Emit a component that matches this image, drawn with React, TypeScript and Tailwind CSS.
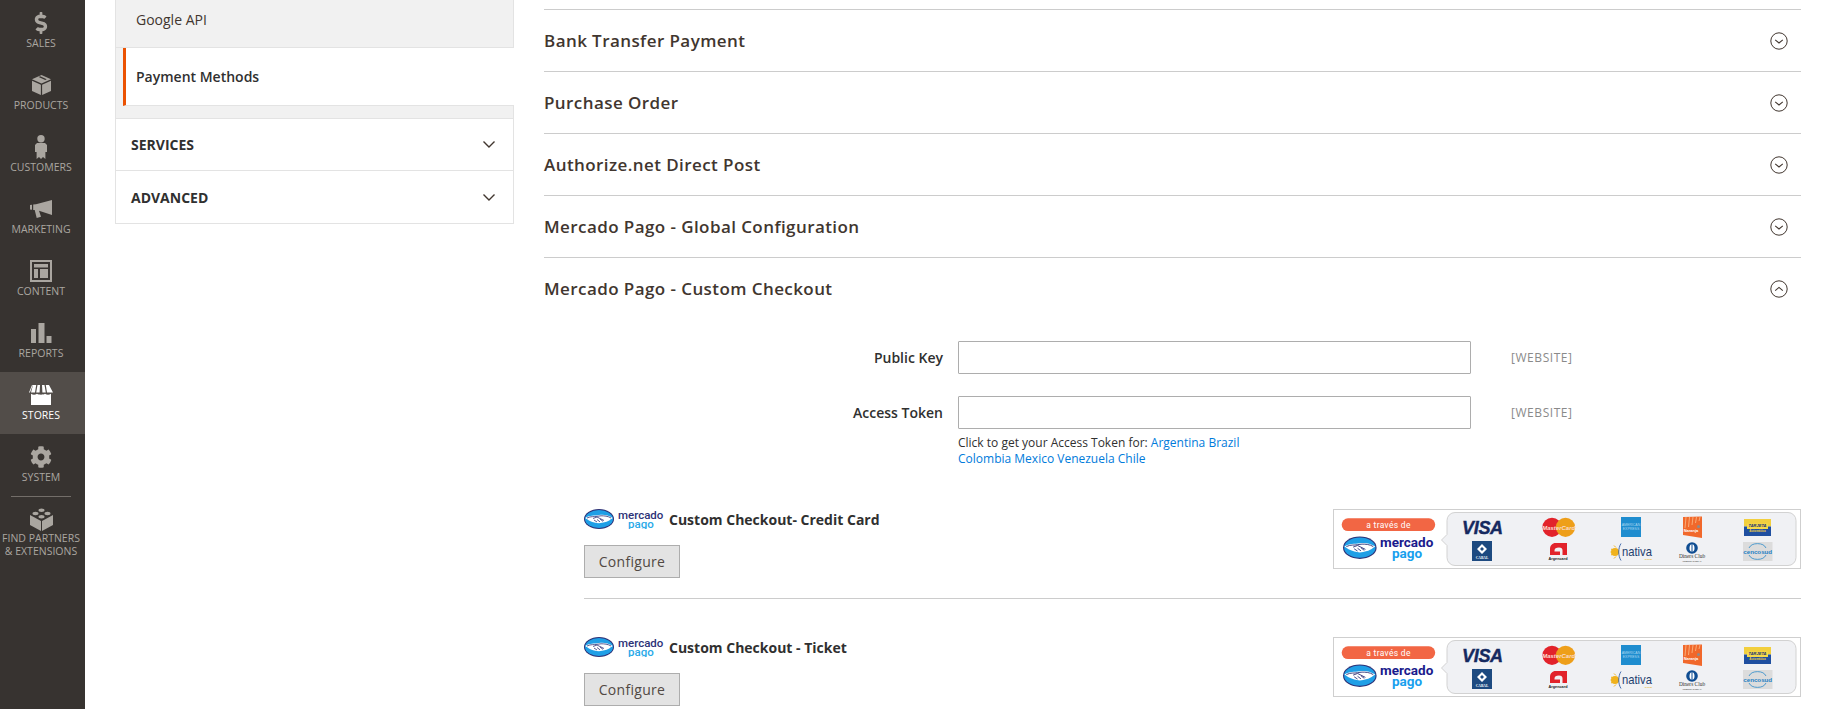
import React from "react";
import { FaDollarSign, FaCog } from "react-icons/fa";

function Chev({ up = false }: { up?: boolean }) {
  return (
    <svg width="18" height="18" viewBox="0 0 18 18" fill="none" stroke="#41362f">
      <circle cx="9" cy="9" r="8.2" strokeWidth="1" />
      <path d={up ? "M5.2 10.6 L9 7.4 L12.8 10.6" : "M5.2 7.8 L9 11 L12.8 7.8"} strokeWidth="1.1" />
    </svg>
  );
}

function SmallChev() {
  return (
    <svg width="14" height="9" viewBox="0 0 14 9" fill="none" stroke="#41362f" strokeWidth="1.4">
      <path d="M1.5 1.5 L7 7 L12.5 1.5" />
    </svg>
  );
}

const icons: Record<string, React.ReactNode> = {
  sales: <FaDollarSign size={22} />,
  products: (
    <svg width="19" height="20" viewBox="0 0 19 20" fill="currentColor">
      <path d="M9.5 0 L19 4.2 L9.5 8.4 L0 4.2 Z M6.7 1.9 L13.2 5 L14.7 4.3 L8.2 1.3 Z" fillRule="evenodd" />
      <path d="M0 5.7 L8.9 9.7 L8.9 20 L0 16 Z" />
      <path d="M19 5.7 L10.1 9.7 L10.1 20 L19 16 Z" />
    </svg>
  ),
  customers: (
    <svg width="12" height="24" viewBox="0 0 12 24" fill="currentColor">
      <circle cx="6" cy="3.7" r="3.7" />
      <path d="M2 8 L10 8 L12 10 L12 17 L10.4 17 L10.4 24 L8 22 L6 24 L4 22 L1.6 24 L1.6 17 L0 17 L0 10 Z" />
    </svg>
  ),
  marketing: (
    <svg width="22" height="18" viewBox="0 0 22 18" fill="currentColor">
      <path d="M0 5 L2 4.7 L2 9.8 L0 9.5 Z" />
      <path d="M3.2 4.5 L6 4.3 L22 0 L22 15 L9 10.7 L11 16.8 L6.7 18 L4.7 10 L3.2 10 Z" />
    </svg>
  ),
  content: (
    <svg width="22" height="22" viewBox="0 0 22 22" fill="currentColor">
      <path d="M0 0 H22 V22 H0 Z M2 2 V20 H20 V2 Z" fillRule="evenodd" />
      <rect x="4" y="4" width="14" height="3.5" />
      <rect x="4" y="9" width="4" height="9" />
      <rect x="10" y="9" width="8" height="9" />
    </svg>
  ),
  reports: (
    <svg width="21" height="20" viewBox="0 0 21 20" fill="currentColor">
      <rect x="0" y="6" width="5" height="14" />
      <rect x="7.5" y="0" width="6" height="20" />
      <rect x="15.5" y="13" width="5" height="7" />
    </svg>
  ),
  stores: (
    <svg width="24" height="20" viewBox="0 0 24 20" fill="currentColor">
      <path d="M4 0 H7.2 L6 7.5 H2 Z M8.5 0 H11 L10.6 7.5 H7.2 Z M13 0 H15.5 L16.8 7.5 H13.4 Z M16.8 0 H20 L24 7.5 H18 Z M3 0 L0 7.5 H1 L3.8 0 Z" />
      <path d="M2 8.8 C4 10 6 10 8 8.8 C10 10 14 10 16 8.8 C18 10 20 10 22 8.8 V20 H2 Z" />
    </svg>
  ),
  system: <FaCog size={22} />,
  partners: (
    <svg width="23" height="23" viewBox="0 0 23 23" fill="currentColor">
      <ellipse cx="11.5" cy="2.2" rx="3" ry="1.7" />
      <ellipse cx="5.5" cy="5.5" rx="3" ry="1.7" />
      <ellipse cx="17.5" cy="5.5" rx="3" ry="1.7" />
      <ellipse cx="11.5" cy="8.7" rx="3" ry="1.7" />
      <path d="M0 7 L11 13 L11 23 L0 17 Z" />
      <path d="M23 7 L12 13 L12 23 L23 17 Z" />
    </svg>
  ),
};

const menu: [string, string, boolean][] = [
  ["sales", "SALES", false],
  ["products", "PRODUCTS", false],
  ["customers", "CUSTOMERS", false],
  ["marketing", "MARKETING", false],
  ["content", "CONTENT", false],
  ["reports", "REPORTS", false],
  ["stores", "STORES", true],
  ["system", "SYSTEM", false],
];

function MenuItem({ icon, label, active }: { icon: string; label: string; active?: boolean }) {
  return (
    <div
      className={
        active
          ? "flex h-[62px] flex-col items-center bg-[#524d49] pt-[10px] pr-[3px] text-white"
          : "flex h-[62px] flex-col items-center pt-[10px] pr-[3px] text-[#aaa6a0]"
      }
    >
      <div className="flex h-[26px] items-center justify-center">{icons[icon]}</div>
      <div className="mt-px text-[10.5px] leading-[13px] whitespace-nowrap">{label}</div>
    </div>
  );
}

function Section({ title, up }: { title: string; up?: boolean }) {
  return (
    <div className="flex h-[62px] items-center justify-between border-t border-[#cccccc] pr-[13px]">
      <span className="text-[17px] font-semibold tracking-[0.42px] text-[#41362f]">{title}</span>
      <Chev up={up} />
    </div>
  );
}

function MercadoHands({ x, y, s }: { x: number; y: number; s: number }) {
  return (
    <g transform={`translate(${x} ${y}) scale(${s})`}>
      <ellipse cx="15" cy="10" rx="15" ry="10" fill="#2d3277" />
      <ellipse cx="15" cy="10" rx="14" ry="9" fill="#1f9fe6" />
      <path d="M1.2 9 C6 5.8 10 7 15 6 C20 5.4 24 6 28.8 9 C26 10.5 24 13.6 15 14.2 C8 13.8 4 11 1.2 9 Z" fill="#fff" />
      <path d="M3 9 C7 7 10 8 13 7.3 L17 6.8 C20 6.8 24 7 27 9 M9 9.5 L13 8 L16 9.5 L20 11.5 M10 11 L13 13 M13 10.5 L16 12.8 M16 10 L19 12.4" fill="none" stroke="#2d3277" strokeWidth="0.8" />
    </g>
  );
}

function MercadoLogo() {
  return (
    <svg width="81" height="20" viewBox="0 0 81 20" className="shrink-0">
      <MercadoHands x={0} y={0} s={1} />
      <text fontFamily="Roboto, sans-serif" fontSize="11.5" fontWeight="500">
        <tspan x="34" y="9.5" fill="#2d3277">mercado</tspan>
        <tspan x="44" y="18.5" fill="#29a9e8">pago</tspan>
      </text>
    </svg>
  );
}

function Banner() {
  return (
    <svg width="468" height="60" viewBox="0 0 468 60" className="shrink-0">
      <rect x="0.5" y="0.5" width="467" height="59" fill="#fff" stroke="#cfcfcf" />
      <rect x="8.7" y="9.3" width="93.5" height="12.7" rx="6.3" fill="#f26644" />
      <text x="55.5" y="19.3" textAnchor="middle" fontFamily="Roboto, sans-serif" fontSize="8.5" letterSpacing="0.3" fill="#fff">a través de</text>
      <MercadoHands x={10} y={27.5} s={1.12} />
      <text fontFamily="Roboto, sans-serif" fontSize="13.5" fontWeight="700">
        <tspan x="47" y="38" fill="#1a1a8c">mercado</tspan>
        <tspan x="59" y="49" fill="#18a0ee">pago</tspan>
      </text>
      <path d="M122 3.5 H455 A8 8 0 0 1 463 11.5 V48.5 A8 8 0 0 1 455 56.5 H122 A8 8 0 0 1 114 48.5 V36.5 L108.5 31 L114 25.5 V11.5 A8 8 0 0 1 122 3.5 Z" fill="#f0f1f4" stroke="#d2d2d2" />
      <text x="129" y="24.5" fontFamily="'Liberation Sans', sans-serif" fontSize="18" fontWeight="700" fontStyle="italic" letterSpacing="-0.3" fill="#15295f" stroke="#15295f" strokeWidth="0.4">VISA</text>
      <circle cx="219" cy="18.3" r="9.6" fill="#e2232b" />
      <circle cx="232.5" cy="18.3" r="9.6" fill="#ee9f1a" />
      <text x="225.7" y="20.5" textAnchor="middle" fontFamily="'Liberation Sans', sans-serif" fontSize="6" fontStyle="italic" fontWeight="700" fill="#fbdcd0">MasterCard</text>
      <rect x="288" y="8" width="20" height="20" fill="#1f8dcf" />
      <text fontFamily="'Liberation Sans', sans-serif" fontSize="3.5" fill="#a7d6f0" textAnchor="middle">
        <tspan x="298" y="17">AMERICAN</tspan>
        <tspan x="298" y="21">EXPRESS</tspan>
      </text>
      <path d="M350 8 L369 7.5 L369 29 L350 26 Z" fill="#f1682b" />
      <path d="M353 8 L352 19 M356.5 8 L355.5 18 M360 8 L359 16 M363.5 8 L362.5 14 M367 8 L366 12" stroke="#f9b27e" strokeWidth="0.9" fill="none" />
      <text x="358" y="23" textAnchor="middle" fontFamily="'Liberation Sans', sans-serif" fontSize="4" fontWeight="700" fill="#fff">Naranja</text>
      <circle cx="365.5" cy="17.5" r="1.5" fill="#8c8c8c" />
      <rect x="411" y="10" width="27" height="7.5" fill="#f2cf3e" />
      <rect x="411" y="17.5" width="27" height="9.5" fill="#1f4fa0" />
      <rect x="414" y="14.5" width="21" height="5.5" fill="#f6d94a" />
      <text fontFamily="'Liberation Sans', sans-serif" fontWeight="700" textAnchor="middle">
        <tspan x="424.5" y="18" fontSize="4" fontStyle="italic" fill="#142e73">TARJETA</tspan>
        <tspan x="424.5" y="23" fontSize="3" fill="#f2cf3e">Automática</tspan>
      </text>
      <rect x="139" y="32" width="20" height="20" fill="#1d4a80" />
      <path d="M149 35 L154 40 L149 45 L144 40 Z M149 38 L147 40 L149 42 L151 40 Z" fill="#fff" fillRule="evenodd" />
      <text x="149" y="50.3" textAnchor="middle" fontFamily="'Liberation Serif', serif" fontSize="3.6" fontWeight="700" fill="#fff">CABAL</text>
      <path d="M217 46 V40 C217 36.5 219.5 34 222.5 34 H234 V46 H229.5 V41.5 C229.5 39.5 228.5 38.5 226 38.5 C223 38.5 221.5 39.7 221.5 41.5 V42.5 H227 V46 Z" fill="#e2232b" />
      <text x="225" y="50.5" textAnchor="middle" fontFamily="'Liberation Sans', sans-serif" fontSize="3.8" fontWeight="700" fill="#222">Argencard</text>
      <circle cx="282" cy="43" r="4" fill="#f0b21c" />
      <path d="M281 36.5 L283 38.5 M278 40 L280 41 M278 46 L280 45 M281 49.5 L283 47.5 M277.5 43 H279" stroke="#f0b21c" strokeWidth="1" />
      <path d="M288 34.5 C285 39 285 47 288 51.5" fill="none" stroke="#1f4fa0" strokeWidth="0.8" />
      <text x="289" y="47" fontFamily="'Liberation Sans', sans-serif" fontSize="13" textLength="30" lengthAdjust="spacingAndGlyphs" fill="#23406e">nativa</text>
      <text x="319" y="51" textAnchor="end" fontFamily="'Liberation Sans', sans-serif" fontSize="2.5" fontWeight="700" fill="#e8b21c">GOLD</text>
      <circle cx="359" cy="39" r="5.8" fill="#0f4d92" />
      <ellipse cx="359" cy="39" rx="2.5" ry="3.8" fill="#fff" />
      <rect x="358.5" y="34" width="1" height="10" fill="#0f4d92" />
      <text fill="#333" textAnchor="middle">
        <tspan x="359" y="49" fontFamily="'Liberation Serif', serif" fontSize="5.4">Diners Club</tspan>
        <tspan x="359" y="52.5" fontFamily="'Liberation Sans', sans-serif" fontSize="2.4">INTERNATIONAL</tspan>
      </text>
      <rect x="410" y="33" width="29.5" height="19" fill="#dcdcdc" />
      <path d="M416 39 A9 6.5 0 0 1 433 39 M416 46 A9 6.5 0 0 0 433 46" fill="none" stroke="#2a89c9" strokeWidth="0.8" />
      <text x="424.7" y="44.5" textAnchor="middle" fontFamily="'Liberation Sans', sans-serif" fontSize="6.2" fontWeight="700" fill="#1f7fc4">cencosud</text>
    </svg>
  );
}

function Checkout({ title, last }: { title: string; last?: boolean }) {
  return (
    <div className={last ? "ml-10 flex justify-between pt-[38px]" : "ml-10 flex justify-between border-b border-[#cccccc] pb-[20px]"}>
      <div>
        <div className="flex h-[20px] items-center gap-[4px]">
          <MercadoLogo />
          <span className="text-[14px] font-bold text-[#303030]">{title}</span>
        </div>
        <button className="mt-[16px] h-[33px] w-[96px] border border-[#adadad] bg-[#e3e3e3] text-[14px] font-medium tracking-[0.3px] text-[#514943]">
          Configure
        </button>
      </div>
      <Banner />
    </div>
  );
}

function Field({ label }: { label: string }) {
  return (
    <div className="flex items-center">
      <label className="w-[414px] pr-[15px] text-right text-[14px] font-semibold text-[#303030]">{label}</label>
      <input className="h-[33px] w-[513px] rounded-[1px] border border-[#adadad] bg-white" />
      <span className="ml-10 text-[12px] tracking-[0.55px] text-[#8a8a8a]">[WEBSITE]</span>
    </div>
  );
}

export default function App() {
  const link = "text-[#007bdb]";
  return (
    <div className="flex h-[709px] w-[1827px] overflow-hidden bg-white font-['Open_Sans',sans-serif] text-[14px] text-[#303030]">
      <aside className="h-full w-[85px] shrink-0 bg-[#373330]">
        {menu.map(([i, l, a]) => (
          <MenuItem key={i} icon={i} label={l} active={a} />
        ))}
        <div className="mr-[14px] ml-[11px] h-px bg-[#736e69]" />
        <div className="flex flex-col items-center pt-[11px] pr-[3px] text-[#aaa6a0]">
          <div className="flex h-[23px] items-center">{icons.partners}</div>
          <div className="mt-[1px] text-[10.5px] leading-[13px] whitespace-nowrap">FIND PARTNERS</div>
          <div className="text-[10.5px] leading-[13px] whitespace-nowrap">&amp; EXTENSIONS</div>
        </div>
      </aside>

      <nav className="ml-[30px] w-[399px] shrink-0">
        <div className="flex h-[48px] items-center border-r border-b border-l border-[#e3e3e3] bg-[#f1f1f1] pb-[8px] pl-[20px] text-[#41362f]">
          Google API
        </div>
        <div className="flex h-[58px] border-l border-[#e3e3e3] bg-[#f1f1f1] pl-[7px]">
          <div className="flex flex-1 items-center border-b border-l-[3px] border-[#e3e3e3] border-l-[#eb5202] bg-white pl-[10px] font-semibold text-[#303030]">
            Payment Methods
          </div>
        </div>
        <div className="h-[12px] border-x border-[#e3e3e3] bg-[#f1f1f1]" />
        <div className="flex h-[53px] items-center justify-between border border-[#e3e3e3] pr-[17px] pl-[15px] font-bold text-[#303030]">
          SERVICES
          <SmallChev />
        </div>
        <div className="flex h-[53px] items-center justify-between border-x border-b border-[#e3e3e3] pr-[17px] pl-[15px] font-bold text-[#303030]">
          ADVANCED
          <SmallChev />
        </div>
      </nav>

      <main className="ml-[30px] w-[1257px] shrink-0 pt-[9px]">
        <Section title="Bank Transfer Payment" />
        <Section title="Purchase Order" />
        <Section title="Authorize.net Direct Post" />
        <Section title="Mercado Pago - Global Configuration" />
        <Section title="Mercado Pago - Custom Checkout" up />

        <div className="mt-[22px] flex flex-col gap-[22px]">
          <Field label="Public Key" />
          <Field label="Access Token" />
        </div>
        <div className="mt-[6px] ml-[414px] w-[290px] text-[12px] leading-[16px] text-[#303030]">
          Click to get your Access Token for: <a className={link}>Argentina</a> <a className={link}>Brazil</a>{" "}
          <a className={link}>Colombia</a> <a className={link}>Mexico</a> <a className={link}>Venezuela</a>{" "}
          <a className={link}>Chile</a>
        </div>

        <div className="mt-[42px]">
          <Checkout title="Custom Checkout- Credit Card" />
          <Checkout title="Custom Checkout - Ticket" last />
        </div>
      </main>
    </div>
  );
}
